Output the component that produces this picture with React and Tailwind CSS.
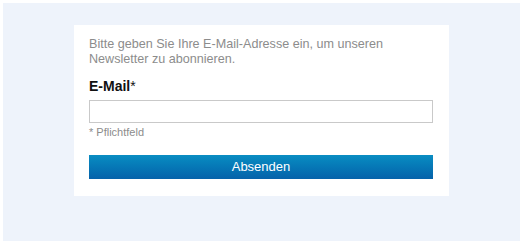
export default function App() {
  return (
    <div className="w-[523px] h-[244px] bg-white p-[3px] font-['Liberation_Sans',Arial,sans-serif]">
      <div className="h-[238px] w-[517px] bg-[#eef3fb] pt-[22px] pl-[71px]">
        <div className="w-[375px] h-[171px] bg-white pl-[15px] pr-[16px] pt-[12px]">
          <p className="text-[12.6px] leading-[15px] text-[#8c8c8c]">
            Bitte geben Sie Ihre E-Mail-Adresse ein, um unseren Newsletter zu abonnieren.
          </p>
          <label className="block mt-[11px] text-[14px] leading-[16px] font-bold text-[#111]">
            E-Mail<span className="font-normal">*</span>
          </label>
          <input
            type="email"
            className="block mt-[6px] w-full h-[23px] border border-[#c9c9c9] bg-white outline-none"
          />
          <p className="mt-[3px] text-[11px] leading-[13px] text-[#8c8c8c]">* Pflichtfeld</p>
          <button className="mt-[16px] w-full h-[24px] bg-gradient-to-b from-[#0a8dc2] to-[#0662aa] text-white text-[13px] leading-[24px]">
            Absenden
          </button>
        </div>
      </div>
    </div>
  )
}
